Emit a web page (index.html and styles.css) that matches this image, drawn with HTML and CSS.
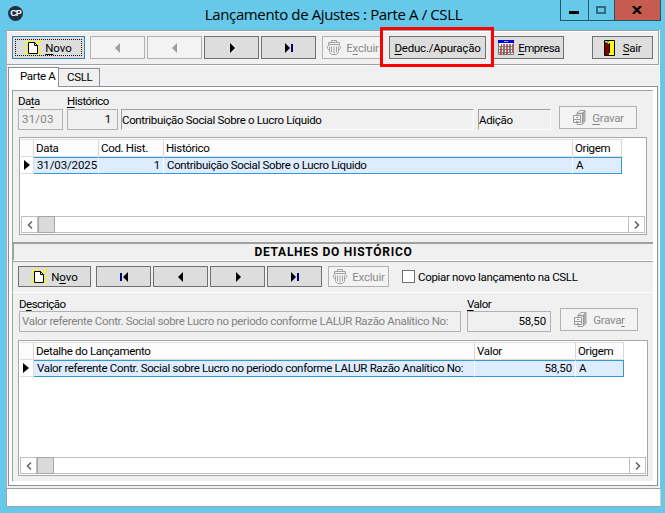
FILE: index.html
```html
<!DOCTYPE html>
<html lang="pt-BR">
<head>
<meta charset="utf-8">
<title>Lançamento de Ajustes : Parte A / CSLL</title>
<link rel="stylesheet" href="styles.css">
</head>
<body>
<svg class="defs" width="0" height="0" aria-hidden="true">
  <symbol id="new" viewBox="0 0 16 15"><path d="M1 1l3 3M15.500 0L12 4M6.500 0v3M0 7.500h4M12 8h4M0 14.500L4 11M12 11l3 3.500M7.500 13v2" stroke="#ff0" stroke-width="2"/><path d="M3.500 2.500h6l3 3v8h-9z" fill="#fff" stroke="#000"/><path d="M9.500 2.500v3h3" fill="none" stroke="#000"/></symbol>
  <symbol id="trash" viewBox="0 0 16 16"><path d="M5.500 2.500v-2h5v2M2.500 4.500v-2h11v2zM3.500 4.500l-2 2v2l2 2v2l2 2h5l2-2v-2l2-2v-2l-2-2M5.500 6.500v6M8 6.500v7M10.500 6.500v6M3.500 6.500v4M12.500 6.500v4" fill="none" stroke="#a3a3a3"/></symbol>
  <symbol id="save" viewBox="0 0 14 17"><path d="M5 4l3-2.500h5v11L10 15.500H5L5 4z" fill="#f7f7f7" stroke="#a0a0a0"/><path d="M5 4.500h5.500L13 2M10.500 4.500v10.500M12 4v9" fill="none" stroke="#999" stroke-width="1.300"/><path d="M1.500 6.500h7v4h-7zM1.500 10.500v3h7v-3" fill="#f3f3f3" stroke="#999"/><path d="M4 8.500h2M4 12.500h2" stroke="#999"/></symbol>
  <symbol id="calendar" viewBox="0 0 16 15"><path fill="#fff" d="M0 0h16v15H0z"/><path d="M.5 3v11.500h15V3M0 6.500h16M0 9.500h16M0 12.500h16M3.500 4v10M6.500 4v10M9.500 4v10M12.500 4v10" fill="none" stroke="#777"/><path d="M5 5h1M8 5h1M11 5h1M14 5h1M2 8h1M5 8h1M8 8h1M11 8h1M14 8h1M2 11h1M5 11h1M8 11h1M11 11h1M14 11h1M2 13.500h1M5 13.500h1M8 13.500h1" stroke="#f00" stroke-width="1.500"/><path fill="#0000e0" d="M0 0h16v3H0z"/><path stroke="#aaf" d="M6 1.500h4"/></symbol>
  <symbol id="door" viewBox="0 0 12 16"><path fill="#ff0" stroke="#000" d="M.5.5h10v15H.5z"/><path fill="#800000" d="M1 2l4 2v11H1z"/><path d="M5.500 3v10" stroke="#000"/><path d="M3 1.500h2M2 2.500h2" stroke="#0cc"/></symbol>
  <symbol id="prev" viewBox="0 0 16 10"><path d="M10 0v10L5 5z" fill="currentColor"/></symbol>
  <symbol id="next" viewBox="0 0 16 10"><path d="M6 0v10l5-5z" fill="currentColor"/></symbol>
  <symbol id="first" viewBox="0 0 16 10"><path d="M4 1h2v8H4z" fill="#000080"/><path d="M12 0v10L7 5z" fill="currentColor"/></symbol>
  <symbol id="last" viewBox="0 0 16 10"><path d="M4 0v10l5-5z" fill="currentColor"/><path d="M10 1h2v8h-2z" fill="#000080"/></symbol>
  <symbol id="left" viewBox="0 0 6 8"><path d="M5 .5L1.500 4 5 7.500" fill="none" stroke="#606060" stroke-width="1.500"/></symbol>
  <symbol id="right" viewBox="0 0 6 8"><path d="M1 .5L4.500 4 1 7.500" fill="none" stroke="#606060" stroke-width="1.500"/></symbol>
</svg>
<div class="window">
  <header class="titlebar">
    <div class="logo"><span>CP</span></div>
    <h1>Lançamento de Ajustes : Parte A / CSLL</h1>
    <div class="controls">
      <div class="min"><svg width="10" height="3"><path d="M0 0h10v3H0z"/></svg></div>
      <div class="max"><svg width="10" height="8"><path d="M1 1h8v6H1z" fill="none" stroke="#356b7c" stroke-width="2"/></svg></div>
      <div class="close"><svg width="10" height="8"><path d="M1 0l8 8M9 0L1 8" stroke="#000" stroke-width="2.300"/></svg></div>
    </div>
  </header>
  <main class="client">
    <nav class="toolbar">
      <button class="btn w-new focused"><svg width="16" height="15"><use href="#new"/></svg><span><u>N</u>ovo</span></button>
      <div class="nav">
        <button class="btn off"><svg width="16" height="10"><use href="#prev"/></svg></button>
        <button class="btn off"><svg width="16" height="10"><use href="#prev"/></svg></button>
        <button class="btn"><svg width="16" height="10"><use href="#next"/></svg></button>
        <button class="btn"><svg width="16" height="10"><use href="#last"/></svg></button>
      </div>
      <button class="btn off w-del"><svg width="16" height="16"><use href="#trash"/></svg><span>E<u>x</u>cluir</span></button>
      <div class="marked"><button class="btn w-ded"><span><u>D</u>educ./Apuração</span></button><div class="mark"></div></div>
      <button class="btn w-emp"><svg width="16" height="15"><use href="#calendar"/></svg><span><u>E</u>mpresa</span></button>
      <button class="btn w-exit"><svg width="12" height="16"><use href="#door"/></svg><span><u>S</u>air</span></button>
    </nav>
    <div class="tabs"><div class="tab active"><span>Parte A</span></div><div class="tab"><span>CSLL</span></div></div>
    <section class="page">
      <div class="panel upper">
        <div class="fields">
          <div class="field f-date"><label>Da<u>t</u>a</label><div class="input off"><span>31/03</span></div></div>
          <div class="field f-code"><label><u>H</u>istórico</label><div class="input num">1</div></div>
          <div class="sunken s-desc"><span class="tight">Contribuição Social Sobre o Lucro Líquido</span></div>
          <div class="sunken s-kind"><span>Adição</span></div>
          <button class="btn off save"><svg width="14" height="17"><use href="#save"/></svg><span><u>G</u>ravar</span></button>
        </div>
        <div class="grid g1">
          <div class="row head"><i></i><div>Data</div><div>Cod. Hist.</div><div>Histórico</div><div>Origem</div></div>
          <div class="row sel"><i></i><div class="date">31/03/2025</div><div class="num">1</div><div><span class="tight">Contribuição Social Sobre o Lucro Líquido</span></div><div>A</div></div>
          <div class="scroll"><b><svg width="6" height="8"><use href="#left"/></svg></b><em></em><b class="end"><svg width="6" height="8"><use href="#right"/></svg></b></div>
        </div>
      </div>
      <h2>DETALHES DO HISTÓRICO</h2>
      <div class="toolbar2">
        <button class="btn w-new"><svg width="16" height="15"><use href="#new"/></svg><span>N<u>o</u>vo</span></button>
        <div class="nav">
          <button class="btn"><svg width="16" height="10"><use href="#first"/></svg></button>
          <button class="btn"><svg width="16" height="10"><use href="#prev"/></svg></button>
          <button class="btn"><svg width="16" height="10"><use href="#next"/></svg></button>
          <button class="btn"><svg width="16" height="10"><use href="#last"/></svg></button>
        </div>
        <button class="btn off w-del"><svg width="16" height="16"><use href="#trash"/></svg><span>Excluir</span></button>
        <div class="check"><i></i><span>Copiar novo lançamento na CSLL</span></div>
      </div>
      <div class="panel lower">
        <div class="fields">
          <div class="field f-long"><label>D<u>e</u>scrição</label><div class="input off"><span class="long">Valor referente Contr. Social sobre Lucro no periodo conforme LALUR Razão Analítico No:</span></div></div>
          <div class="field f-value"><label><u>V</u>alor</label><div class="input num">58,50</div></div>
          <button class="btn off save"><svg width="14" height="17"><use href="#save"/></svg><span>Grava<u>r</u></span></button>
        </div>
        <div class="grid g2">
          <div class="row head"><i></i><div>Detalhe do Lançamento</div><div>Valor</div><div>Origem</div></div>
          <div class="row sel"><i></i><div><span class="long">Valor referente Contr. Social sobre Lucro no periodo conforme LALUR Razão Analítico No:</span></div><div class="num">58,50</div><div>A</div></div>
          <div class="scroll"><b><svg width="6" height="8"><use href="#left"/></svg></b><em></em><b class="end"><svg width="6" height="8"><use href="#right"/></svg></b></div>
        </div>
      </div>
    </section>
  </main>
  <footer class="status"></footer>
</div>
</body>
</html>
```
FILE: styles.css
```css
* { box-sizing: border-box; }
body { margin: 0; font: 11.5px/14px Roboto, "Liberation Sans", sans-serif; letter-spacing: -.33px; color: #000; white-space: nowrap; overflow: hidden; }
.defs { position: absolute; }
svg { display: block; flex: none; }
u { text-decoration-thickness: 1px; text-underline-offset: 2px; text-decoration-skip-ink: none; }
.window { width: 665px; height: 513px; background: #66c9ea; padding: 0 5px 0 6px; }
.titlebar { height: 30px; position: relative; display: flex; justify-content: space-between; }
.logo { width: 15px; height: 15px; margin: 6px 0 0 2px; border-radius: 50%; background: #203043; color: #fff; font: bold 9px/15px "Liberation Sans", sans-serif; text-align: center; letter-spacing: -1px; }
h1 { margin: 4px 0 0 84px; font: 15px/20px "Open Sans", sans-serif; letter-spacing: -.38px; }
.controls { display: flex; width: 101px; height: 21px; border: 1px solid #26566b; border-top: 0; margin-right: -1px; }
.controls div { display: grid; place-items: center; }
.min { width: 27px; padding-top: 4px; }
.max { width: 27px; border: solid #26566b; border-width: 0 1px; }
.close { flex: 1; background: #c75b50; }
.client { height: 458px; background: #f0f0f0; border-left: 1px solid #b0aeb4; border-right: 1px solid #fff; }
.toolbar { height: 35px; border: 1px solid #a0a0a0; border-left: 0; padding: 5px 5px 0; display: flex; box-shadow: inset 0 1px #fff; }
.btn { height: 23px; padding: 0; border: 1px solid #707070; background: #ddd; font: inherit; letter-spacing: inherit; color: #000; display: flex; align-items: center; justify-content: center; flex: none; }
.btn.off { background: #f3f3f3; border-color: #adb2b5; color: #8a8a8a; }
.btn.focused { border-color: #3c7fb1; outline: 1px dotted #111; outline-offset: -4px; }
.nav { display: flex; gap: 2px; margin: 0 6px 0 5px; }
.nav .btn { width: 55px; }
.nav .off { color: #a0a0a0; }
.w-new { width: 73px; gap: 4px; letter-spacing: 0; }
.w-del { width: 61px; gap: 4px; letter-spacing: -.2px; }
.marked { position: relative; margin: 0 5px 0 6px; }
.mark { position: absolute; left: -9px; top: -9px; width: 114px; height: 40px; border: 3px solid #f00; z-index: 2; }
.w-ded { width: 97px; letter-spacing: -.22px; }
.w-emp { width: 73px; gap: 4px; padding-left: 3px; letter-spacing: -.5px; }
.w-exit { width: 61px; gap: 7px; margin-left: 28px; }
.tabs { height: 21px; display: flex; align-items: flex-end; padding-left: 1px; box-shadow: inset 0 1px #fff; }
.tab { width: 41px; height: 18px; border: 1px solid #8c8e98; border-left: 0; border-bottom: 0; padding: 1px 0 0 8px; }
.tab.active { width: 51px; height: 20px; margin-bottom: -1px; border-left: 1px solid #8c8e98; background: #fff; padding-left: 11px; z-index: 1; }
.page { width: 650px; height: 400px; margin-left: 1px; border: 1px solid #8c8e98; background: #fff; padding: 3px 4px 4px 3px; }
.panel { background: #f0f0f0; border-left: 1px solid #a0a0a0; }
.upper { height: 152px; border-top: 1px solid #a0a0a0; padding: 3px 0 0 6px; }
.fields { display: flex; align-items: flex-start; }
.field label { display: block; height: 15px; letter-spacing: -.5px; }
.input { height: 21px; border: 1px solid #adb2b5; line-height: 19px; padding: 0 3px; }
.input.off { color: #838383; }
.num { text-align: right; letter-spacing: -.1px; }
.f-date { width: 45px; margin: 0 4px 0 -1px; }
.f-date span { letter-spacing: .2px; }
.f-code { width: 51px; }
.f-code .input { padding-right: 6px; }
.sunken { height: 21px; border: 1px solid #fff; border-top-color: #a0a0a0; border-left-color: #a0a0a0; padding: 3px 0 0; margin-top: 15px; }
.s-desc { width: 353px; margin-left: 3px; }
.s-kind { width: 73px; margin-left: 4px; }
.tight, .long { letter-spacing: -.34px; }
.save { width: 78px; gap: 6px; margin: 12px 0 0 8px; }
.grid { width: 628px; border: 1px solid #a5a7ad; background: #fff; padding: 1px; display: flex; flex-direction: column; }
.g1 { height: 98px; margin-top: 7px; }
.row { display: grid; height: 18px; line-height: 16px; }
.g1 .row { grid-template-columns: 13px 65px 65px 409px 49px; }
.row > * { padding-left: 2px; }
.head { background: #fcfcfc; width: 602px; border-bottom: 1px solid #ddd; border-top: 1px solid #e0e0e0; }
.head > * { border-right: 1px solid #d8d8d8; }
.sel { height: 17px; line-height: 16px; }
.sel > div { background: #deecff; border: solid #3399d6; border-width: 1px 0; border-right: 1px solid #fff; padding-left: 3px; line-height: 15px; }
.sel > div:last-child { border-right-color: #3399d6; }
.sel > i { border-right: 1px solid #ddd; border-bottom: 1px solid #ddd; padding: 3px 0 0 3px; }
.sel > i::before { content: ""; display: block; border: solid transparent; border-width: 5px 0 5px 6px; border-left-color: #000; width: 0; }
.sel > .num { padding-right: 3px; }
.sel > .date { letter-spacing: -.12px; }
.scroll { margin-top: auto; height: 17px; border: 1px solid #bfbfbf; display: flex; }
.scroll b { width: 16px; border-right: 1px solid #bfbfbf; display: grid; place-items: center; }
.scroll em { width: 17px; margin: -1px 0; background: #dadada; border: 1px solid #a6a6a6; }
.scroll .end { margin-left: auto; border-right: 0; border-left: 1px solid #bfbfbf; }
h2 { margin: 0; height: 19px; border-top: 2px solid #a0a0a0; border-bottom: 1px solid #fff; border-left: 2px solid #a0a0a0; background: #f0f0f0; font-size: 12px; line-height: 16px; font-weight: 700; letter-spacing: .72px; text-align: center; }
.toolbar2 { height: 32px; background: #f0f0f0; border: solid #a0a0a0; border-width: 1px 0 0 1px; border-bottom: 1px solid #fff; padding: 4px 0 0 5px; display: flex; }
.toolbar2 .btn { height: 21px; }
.check { display: flex; margin: 4px 0 0 13px; gap: 3px; height: 13px; }
.check i { width: 13px; height: 13px; border: 1px solid #707070; background: #fff; }
.lower { height: 188px; padding: 4px 0 0 5px; }
.lower label { height: 14px; }
.f-long { width: 442px; margin-left: 1px; }
.f-long .input { padding-left: 2px; }
.f-value { width: 84px; margin-left: 6px; }
.f-value .input { padding-right: 4px; }
.lower .save { margin: 11px 0 0 9px; }
.g2 { width: 630px; height: 136px; margin-top: 8px; }
.g2 .row { grid-template-columns: 14px 441px 101px 48px; }
.g2 .head { width: 604px; }
.status { height: 19px; background: #fff; border: 1px solid #a0a0a0; border-right-color: #ccc; width: 655px; }
```
